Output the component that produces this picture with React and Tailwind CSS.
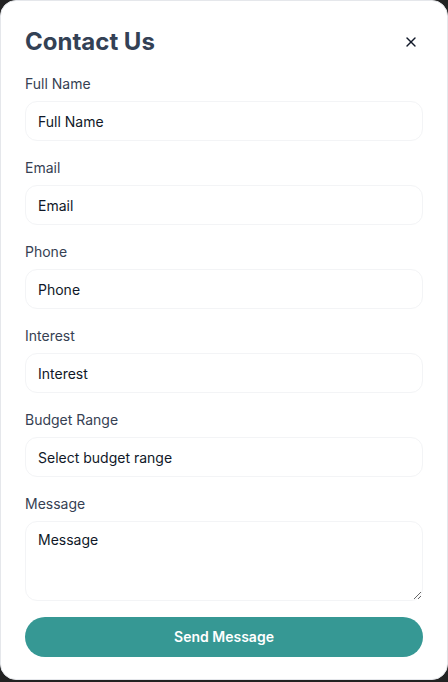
import { X } from 'lucide-react';

const fields = [
  { label: 'Full Name', placeholder: 'Full Name' },
  { label: 'Email', placeholder: 'Email' },
  { label: 'Phone', placeholder: 'Phone' },
  { label: 'Interest', placeholder: 'Interest' },
  { label: 'Budget Range', placeholder: 'Select budget range' },
];

const App = () => {
  return (
    <div className="h-[682px] w-[448px] bg-[#222] font-['Inter',sans-serif]">
      <div className="h-[680px] rounded-2xl border border-gray-200 bg-white px-6 pt-[25px]">
        <div className="flex items-center justify-between mb-4">
          <h2 className="text-2xl font-bold leading-8 text-[#334155]">Contact Us</h2>
          <button type="button" className="mr-1 text-gray-900">
            <X size={16} strokeWidth={2} />
          </button>
        </div>

        {fields.map((field) => (
          <div key={field.label} className="mb-[17px]">
            <label className="block mb-[7px] text-sm leading-5 text-gray-700">{field.label}</label>
            <input
              type="text"
              placeholder={field.placeholder}
              className="block w-full h-10 rounded-xl border border-[#f3f4f6] px-3 text-sm text-gray-900 placeholder:text-gray-900 outline-none"
            />
          </div>
        ))}

        <div className="mb-4">
          <label className="block mb-[7px] text-sm leading-5 text-gray-700">Message</label>
          <textarea
            placeholder="Message"
            className="block w-full h-20 rounded-xl border border-[#f3f4f6] px-3 py-2 text-sm text-gray-900 placeholder:text-gray-900 outline-none"
          />
        </div>

        <button
          type="button"
          className="w-full h-10 rounded-full bg-[#369894] text-sm font-semibold text-white"
        >
          Send Message
        </button>
      </div>
    </div>
  );
};

export default App;
